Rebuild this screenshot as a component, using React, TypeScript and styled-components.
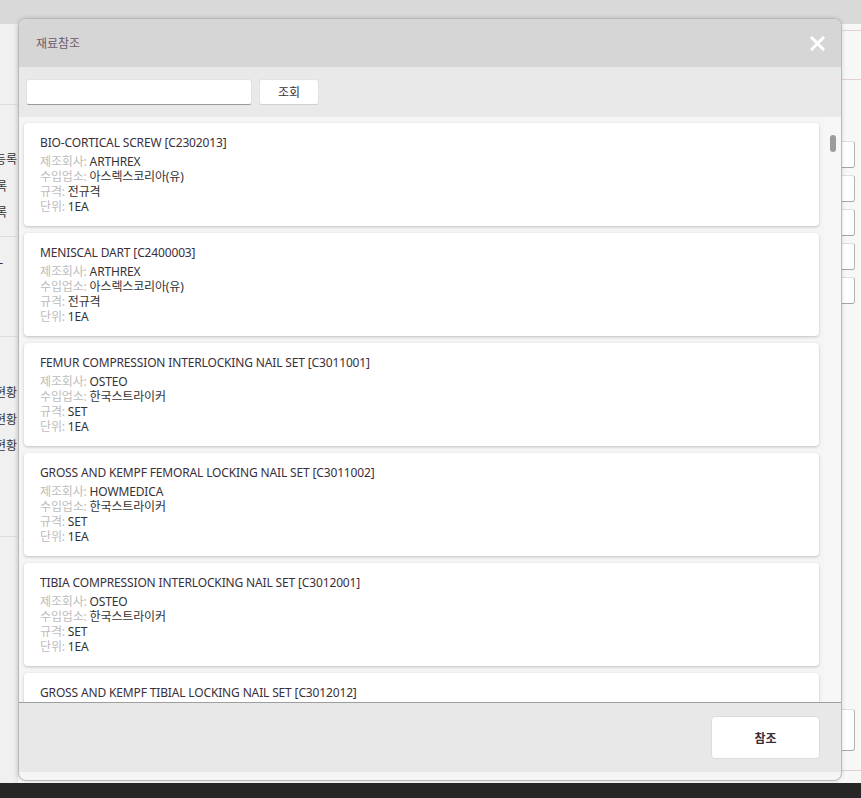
import React from 'react';
import styled, { createGlobalStyle } from 'styled-components';

// material reference popup over the (dimmed) inventory page

interface Material {
  code: string;
  name: string;
  maker: string;
  importer: string;
  spec: string;
  unit: string;
}

const materials: Material[] = [
  { name: 'BIO-CORTICAL SCREW', code: 'C2302013', maker: 'ARTHREX', importer: '아스렉스코리아(유)', spec: '전규격', unit: '1EA' },
  { name: 'MENISCAL DART', code: 'C2400003', maker: 'ARTHREX', importer: '아스렉스코리아(유)', spec: '전규격', unit: '1EA' },
  { name: 'FEMUR COMPRESSION INTERLOCKING NAIL SET', code: 'C3011001', maker: 'OSTEO', importer: '한국스트라이커', spec: 'SET', unit: '1EA' },
  { name: 'GROSS AND KEMPF FEMORAL LOCKING NAIL SET', code: 'C3011002', maker: 'HOWMEDICA', importer: '한국스트라이커', spec: 'SET', unit: '1EA' },
  { name: 'TIBIA COMPRESSION INTERLOCKING NAIL SET', code: 'C3012001', maker: 'OSTEO', importer: '한국스트라이커', spec: 'SET', unit: '1EA' },
  { name: 'GROSS AND KEMPF TIBIAL LOCKING NAIL SET', code: 'C3012012', maker: 'HOWMEDICA', importer: '한국스트라이커', spec: 'SET', unit: '1EA' },
];

const GlobalStyle = createGlobalStyle`
  html, body {
    margin: 0;
    padding: 0;
    height: 100%;
    overflow: hidden;
  }
  body {
    font-family: "Noto Sans", "Noto Sans CJK KR", sans-serif;
    font-size: 12px;
    color: #333;
  }
`;

/* ---------- page behind the popup ---------- */

const Page = styled.div`
  position: relative;
  width: 861px;
  height: 798px;
  display: flex;
  flex-direction: column;
  background: #f7f7f7;
  overflow: hidden;
`;

const TopBar = styled.div`
  height: 24px;
  background: #d9d9d9;
  flex-shrink: 0;
`;

const Body = styled.div`
  flex: 1;
  display: flex;
  min-height: 0;
`;

const Sidebar = styled.div`
  width: 18px;
  flex-shrink: 0;
  background: linear-gradient(to right, #f0f0f0 70%, #e6e6e6);
  display: flex;
  flex-direction: column;
  overflow: hidden;
`;

const SideSection = styled.div<{ $pt: number; $h: number }>`
  height: ${p => p.$h}px;
  padding-top: ${p => p.$pt}px;
  box-sizing: border-box;
  border-bottom: 1px solid #dcdcdc;
  flex-shrink: 0;
`;

const SideItem = styled.div<{ $pr?: number }>`
  height: 26.5px;
  line-height: 26.5px;
  display: flex;
  justify-content: flex-end;
  white-space: nowrap;
  padding-right: ${p => p.$pr ?? 1}px;
  color: #333;
`;

const Main = styled.div`
  flex: 1;
  display: flex;
  flex-direction: column;
  min-width: 0;
`;

const TabStrip = styled.div`
  height: 6px;
  border-bottom: 1px solid #e4cdd4;
  flex-shrink: 0;
`;

const Toolbar = styled.div`
  height: 48px;
  border-bottom: 1px solid #e4cdd4;
  flex-shrink: 0;
`;

const Form = styled.div`
  flex: 1;
  display: flex;
  flex-direction: column;
  align-items: flex-end;
  gap: 7px;
  padding: 61px 6px 0 0;
`;

const Field = styled.div<{ $h?: number }>`
  width: 120px;
  height: ${p => p.$h ?? 27}px;
  box-sizing: border-box;
  background: #fff;
  border: 1px solid #e0e0e0;
  border-right-color: #b5b5b5;
  border-bottom-color: #a5a5a5;
  border-radius: 3px;
`;

const BottomPanel = styled.div`
  height: 76px;
  display: flex;
  justify-content: flex-end;
  padding: 14px 6px 0 0;
  box-sizing: border-box;
  border-bottom: 1px solid #e4cdd4;
  flex-shrink: 0;
`;

const BottomPad = styled.div`
  height: 12px;
  flex-shrink: 0;
`;

const StatusBar = styled.div`
  height: 15px;
  background: #262626;
  flex-shrink: 0;
`;

/* ---------- popup ---------- */

const Modal = styled.div`
  position: absolute;
  left: 18px;
  top: 18px;
  width: 824px;
  height: 763px;
  box-sizing: border-box;
  border: 1px solid #b9b9b9;
  border-radius: 8px;
  background: #f5f5f5;
  display: flex;
  flex-direction: column;
  overflow: hidden;
  box-shadow: 0 0 4px rgba(0, 0, 0, 0.15);
`;

const ModalHeader = styled.div`
  height: 48px;
  flex-shrink: 0;
  background: #d6d6d6;
  display: flex;
  align-items: center;
  justify-content: space-between;
  padding: 0 15px 0 17px;
`;

const ModalTitle = styled.span`
  color: #6d5b6b;
  font-size: 12px;
`;

const CloseButton = styled.button`
  width: 18px;
  height: 18px;
  padding: 0;
  border: none;
  background: none;
  display: flex;
  align-items: center;
  justify-content: center;
  cursor: pointer;
`;

const SearchBar = styled.div`
  height: 50px;
  flex-shrink: 0;
  background: #e9e9e9;
  display: flex;
  align-items: center;
  gap: 7px;
  padding: 0 7px;
  box-sizing: border-box;
`;

const SearchInput = styled.input`
  width: 226px;
  height: 26px;
  box-sizing: border-box;
  border: 1px solid #e2e2e2;
  border-bottom-color: #9a9a9a;
  border-radius: 3px;
  background: #fff;
  outline: none;
  font: inherit;
`;

const SearchButton = styled.button`
  width: 60px;
  height: 26px;
  box-sizing: border-box;
  border: 1px solid #e2e2e2;
  border-bottom-color: #d0d0d0;
  border-radius: 3px;
  background: #fff;
  font: inherit;
  color: #3b2f3a;
  cursor: pointer;
`;

const ListWrap = styled.div`
  position: relative;
  flex: 1;
  min-height: 0;
  background: #f5f5f5;
`;

const List = styled.div`
  height: 100%;
  overflow: hidden;
  display: flex;
  flex-direction: column;
  gap: 7px;
  padding: 6px 22px 0 5px;
  box-sizing: border-box;
`;

const ScrollTrack = styled.div`
  position: absolute;
  top: 0;
  right: 0;
  bottom: 0;
  width: 17px;
  background: #f7f7f7;
`;

const ScrollThumb = styled.div`
  position: absolute;
  top: 18px;
  left: 6px;
  width: 6px;
  height: 17px;
  border-radius: 3px;
  background: #9b9b9b;
`;

const Card = styled.div`
  flex-shrink: 0;
  height: 103px;
  box-sizing: border-box;
  background: #fff;
  border-radius: 4px;
  box-shadow: 0 1px 3px rgba(0, 0, 0, 0.22);
  padding: 11px 16px 0;
  letter-spacing: -0.15px;
`;

const CardTitle = styled.div`
  height: 18px;
  line-height: 18px;
  margin-bottom: 2px;
  color: #3a2f3a;
  white-space: nowrap;
`;

const InfoLine = styled.div`
  height: 15px;
  line-height: 15px;
  color: #333;
  white-space: nowrap;
`;

const InfoLabel = styled.span`
  color: #bdbdbd;
`;

const ModalFooter = styled.div`
  height: 70px;
  flex-shrink: 0;
  margin-bottom: 8px;
  background: #e8e8e8;
  border-top: 1px solid #9e9e9e;
  display: flex;
  justify-content: flex-end;
  align-items: flex-start;
  padding: 13px 21px 0 0;
  box-sizing: border-box;
`;

const RefButton = styled.button`
  width: 109px;
  height: 43px;
  border: 1px solid #dcdcdc;
  border-radius: 4px;
  background: #fff;
  font: inherit;
  font-weight: 600;
  color: #3b2f3a;
  cursor: pointer;
`;

const MaterialCard: React.FC<{ item: Material }> = ({ item }) => (
  <Card>
    <CardTitle>{item.name} [{item.code}]</CardTitle>
    <InfoLine><InfoLabel>제조회사: </InfoLabel>{item.maker}</InfoLine>
    <InfoLine><InfoLabel>수입업소: </InfoLabel>{item.importer}</InfoLine>
    <InfoLine><InfoLabel>규격: </InfoLabel>{item.spec}</InfoLine>
    <InfoLine><InfoLabel>단위: </InfoLabel>{item.unit}</InfoLine>
  </Card>
);

export default function App() {
  return (
    <>
      <GlobalStyle />
      <Page>
        <TopBar />
        <Body>
          <Sidebar>
            <SideSection $h={81} $pt={0} />
            <SideSection $h={132} $pt={42}>
              <SideItem>신규재료등록</SideItem>
              <SideItem $pr={11}>거래처목록</SideItem>
              <SideItem $pr={11}>제조사목록</SideItem>
            </SideSection>
            <SideSection $h={100} $pt={13}>
              <SideItem $pr={15}>-</SideItem>
            </SideSection>
            <SideSection $h={200} $pt={43}>
              <SideItem>재고현황</SideItem>
              <SideItem>입출고현황</SideItem>
              <SideItem>사용현황</SideItem>
            </SideSection>
          </Sidebar>
          <Main>
            <TabStrip />
            <Toolbar />
            <Form>
              <Field />
              <Field />
              <Field />
              <Field />
              <Field />
            </Form>
            <BottomPanel>
              <Field $h={42} />
            </BottomPanel>
            <BottomPad />
          </Main>
        </Body>
        <StatusBar />

        <Modal>
          <ModalHeader>
            <ModalTitle>재료참조</ModalTitle>
            <CloseButton aria-label="닫기">
              <svg width="15" height="15" viewBox="0 0 15 15">
                <path d="M2 2 L13 13 M13 2 L2 13" stroke="#fff" strokeWidth="3" strokeLinecap="square" />
              </svg>
            </CloseButton>
          </ModalHeader>
          <SearchBar>
            <SearchInput />
            <SearchButton>조회</SearchButton>
          </SearchBar>
          <ListWrap>
            <List>
              {materials.map(m => (
                <MaterialCard key={m.code} item={m} />
              ))}
            </List>
            <ScrollTrack>
              <ScrollThumb />
            </ScrollTrack>
          </ListWrap>
          <ModalFooter>
            <RefButton>참조</RefButton>
          </ModalFooter>
        </Modal>
      </Page>
    </>
  );
}
